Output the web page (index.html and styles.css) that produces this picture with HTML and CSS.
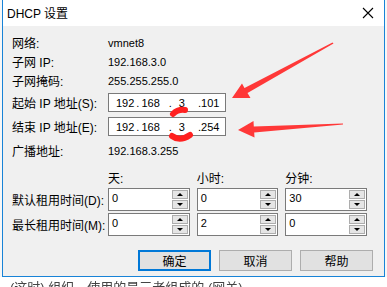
FILE: index.html
```html
<html>
    <head>
        <title>DHCP 设置</title>
        <meta charset="utf-8">
        <link rel="stylesheet" href="styles.css">
    </head>
    <body>
        <div class="desk">
            <div class="dialog">
                <div class="titlebar">
                    <span class="title">DHCP 设置</span>
                    <svg class="close" width="12" height="12" viewBox="0 0 12 12">
                        <path d="M1 1 L11 11 M11 1 L1 11" stroke="#000" stroke-width="1.1" fill="none" />
                    </svg>
                </div>
                <div class="client">
                    <div class="row info first">
                        <span class="label">网络:</span>
                        <span class="num">vmnet8</span>
                    </div>
                    <div class="row info">
                        <span class="label">子网 IP:</span>
                        <span class="num">192.168.3.0</span>
                    </div>
                    <div class="row info">
                        <span class="label">子网掩码:</span>
                        <span class="num">255.255.255.0</span>
                    </div>
                    <div class="row ip-row gap3">
                        <span class="label">起始 IP 地址(S):</span>
                        <div class="ipbox num">
                            <span class="f1">192</span><span class="d1">.</span><span>168</span><span class="d2">.</span><span class="f3">3</span><span class="d3">.</span><span>101</span>
                        </div>
                    </div>
                    <div class="row ip-row gap5">
                        <span class="label">结束 IP 地址(E):</span>
                        <div class="ipbox num">
                            <span class="f1">192</span><span class="d1">.</span><span>168</span><span class="d2">.</span><span class="f3">3</span><span class="d3">.</span><span>254</span>
                        </div>
                    </div>
                    <div class="row info gap5">
                        <span class="label">广播地址:</span>
                        <span class="num">192.168.3.255</span>
                    </div>
                    <div class="row heads">
                        <span class="label"></span>
                        <span class="col">天:</span>
                        <span class="col">小时:</span>
                        <span class="col">分钟:</span>
                    </div>
                    <div class="row spin-row">
                        <span class="label">默认租用时间(D):</span>
                        <div class="spin"><span class="val num">0</span><div class="arrows"><span class="up"></span><span class="down"></span></div></div>
                        <div class="spin"><span class="val num">0</span><div class="arrows"><span class="up"></span><span class="down"></span></div></div>
                        <div class="spin"><span class="val num">30</span><div class="arrows"><span class="up"></span><span class="down"></span></div></div>
                    </div>
                    <div class="row spin-row gap5">
                        <span class="label">最长租用时间(M):</span>
                        <div class="spin"><span class="val num">0</span><div class="arrows"><span class="up"></span><span class="down"></span></div></div>
                        <div class="spin"><span class="val num">2</span><div class="arrows"><span class="up"></span><span class="down"></span></div></div>
                        <div class="spin"><span class="val num">0</span><div class="arrows"><span class="up"></span><span class="down"></span></div></div>
                    </div>
                    <div class="buttons">
                        <button class="btn default">确定</button>
                        <button class="btn">取消</button>
                        <button class="btn">帮助</button>
                    </div>
                </div>
            </div>
            <div class="below">(这时) 组织，使用的是三者组成的 (网关)</div>

            <!-- red annotations drawn over the screenshot -->
            <svg class="marks" width="387" height="287" viewBox="0 0 387 287">
                <polygon fill="#ff3838" points="232,98 250.5,98 247.5,93 333.5,43.5 332.5,42.5 244.5,88 242,83.5" />
                <polygon fill="#ff3838" points="238,130 254.5,137.5 254.2,132.5 343,124.6 343,123.4 253.8,126.5 253.5,121" />
                <path d="M173 114 Q178 109 185 110" stroke="#ff2020" stroke-width="6" stroke-linecap="round" fill="none" />
                <path d="M172 136 Q180 142 190 135" stroke="#ff2020" stroke-width="6" stroke-linecap="round" fill="none" />
            </svg>
        </div>
    </body>
</html>
```

FILE: styles.css
```css
body {
    margin: 0;
    background-color: #fff;
    font-family: "Liberation Sans", "Noto Sans CJK SC", sans-serif;
    font-size: 12px;
    color: #000;
}
.desk {
    position: relative;
    width: 387px;
    height: 287px;
    overflow: hidden;
    background-color: #f7f7f7;
}
.dialog {
    margin-left: 2px;
    width: 381px;
    border-left: 1px solid #1883d7;
    border-right: 1px solid #1883d7;
    border-bottom: 1px solid #1883d7;
}
.titlebar {
    height: 26px;
    background-color: #fff;
    display: flex;
    align-items: center;
    justify-content: space-between;
    padding: 0 10px 0 4px;
}
.title {
    font-size: 12px;
    margin-top: -1px;
}
.close {
    margin-top: -1px;
}
.client {
    background-color: #f0f0f0;
    padding: 7px 10px 5px 9px;
}
.row {
    display: flex;
    align-items: center;
}
.label {
    width: 96px;
    flex-shrink: 0;
    white-space: nowrap;
}
.num {
    font-size: 11px;
}
.info {
    height: 19px;
}
.gap3 {
    margin-top: 3px;
}
.gap5 {
    margin-top: 5px;
}
.ip-row {
    height: 19px;
}
.ipbox {
    height: 17px;
    border: 1px solid #7a7a7a;
    background-color: #fff;
    display: flex;
    align-items: center;
    padding-left: 7px;
    width: 109px;
}
.d1 {
    margin: 0 2px 0 2px;
}
.d2 {
    margin: 0 7px 0 9px;
}
.d3 {
    margin: 0 0 0 13px;
}
.heads {
    height: 17px;
    margin-top: 9px;
}
.col {
    width: 84px;
    margin-right: 7px;
}
.spin-row {
    height: 23px;
    margin-top: 2px;
}
.spin {
    width: 82px;
    height: 21px;
    margin-right: 7px;
    border: 1px solid #7a7a7a;
    background-color: #fff;
    display: flex;
}
.val {
    flex: 1;
    padding: 3px 0 0 3px;
}
.arrows {
    width: 16px;
    display: flex;
    flex-direction: column;
    gap: 1px;
    padding: 1px 1px 1px 0;
}
.arrows span {
    flex: 1;
    border: 1px solid #adadad;
    background-color: #e5e5e5;
    display: flex;
    align-items: center;
    justify-content: center;
}
.up::after {
    content: "";
    border-left: 3px solid transparent;
    border-right: 3px solid transparent;
    border-bottom: 3px solid #000;
}
.down::after {
    content: "";
    border-left: 3px solid transparent;
    border-right: 3px solid transparent;
    border-top: 3px solid #000;
}
.buttons {
    display: flex;
    justify-content: flex-end;
    gap: 8px;
    margin-top: 14px;
    padding-right: 1px;
}
.btn {
    width: 73px;
    height: 21px;
    border: 1px solid #adadad;
    background-color: #e1e1e1;
    font-family: "Liberation Sans", "Noto Sans CJK SC", sans-serif;
    font-size: 12px;
    padding: 0;
}
.btn.default {
    border: 2px solid #0078d7;
}
.below {
    padding-left: 10px;
    padding-top: 3px;
    font-size: 13px;
    line-height: 16px;
    color: #444;
    filter: blur(0.4px);
    background-color: #fff;
    white-space: nowrap;
}
.marks {
    position: absolute;
    top: 0;
    left: 0;
    pointer-events: none;
}
```
